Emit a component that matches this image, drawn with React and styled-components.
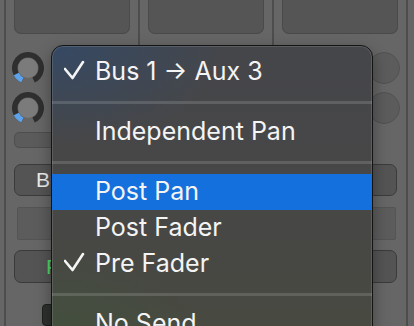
import styled, { createGlobalStyle } from 'styled-components';

const GlobalStyle = createGlobalStyle`
    html, body {
        margin: 0;
        padding: 0;
        background: #666666;
        overflow: hidden;
    }
    body {
        font-family: Inter, "Liberation Sans", sans-serif;
        -webkit-font-smoothing: antialiased;
    }
`;

const Screen = styled.div`
    position: relative;
    width: 414px;
    height: 326px;
    overflow: hidden;
`;

const Mixer = styled.div`
    display: flex;
    margin-left: -130px;
    height: 326px;
`;

const Strip = styled.div`
    flex: none;
    width: 132px;
    border-left: 2px solid #4d4d4d;
    background: #666666;
    display: flex;
    flex-direction: column;
`;

const TopBox = styled.div`
    margin: 0 8px;
    height: 37px;
    box-sizing: border-box;
    background: #555555;
    border: 1px solid #4a4a4a;
    border-top: none;
    border-radius: 0 0 7px 7px;
`;

const KnobRow = styled.div`
    display: flex;
    justify-content: space-between;
    padding: 0 6px;
    margin-top: ${p => p.$gap}px;
    height: 32px;
`;

const FlatKnob = styled.div`
    width: 32px;
    height: 32px;
    box-sizing: border-box;
    border-radius: 50%;
    background: #5c5c5c;
    border: 1px solid #525252;
`;

const ShortField = styled.div`
    margin: 8px 0 0 8px;
    width: 80px;
    height: 17px;
    box-sizing: border-box;
    border-radius: 5px;
    background: #5b5b5b;
    border: 1px solid #4e4e4e;
`;

const StripButton = styled.div`
    margin: ${p => p.$top}px 9px 0 8px;
    padding-left: ${p => p.$indent}px;
    height: 35px;
    box-sizing: border-box;
    border-radius: 7px;
    background: #545454;
    border: 1px solid #3b3b3b;
    display: flex;
    align-items: center;
    color: ${p => p.$color};
    font-size: 21px;
    font-family: "Liberation Sans", sans-serif;
    white-space: nowrap;
`;

const FlatField = styled.div`
    margin: 11px 10px 0 11px;
    height: 36px;
    box-sizing: border-box;
    background: #5c5c5c;
    border: 1px solid #545454;
    border-radius: 2px;
`;

const FaderCap = styled.div`
    margin: 21px 0 0 36px;
    width: 56px;
    height: 24px;
    box-sizing: border-box;
    background: #2e312e;
    border: 1px solid #1f1f1f;
    border-radius: 4px;
`;

const Menu = styled.div`
    position: absolute;
    left: 51px;
    top: 45px;
    width: 322px;
    height: 320px;
    box-sizing: border-box;
    padding-top: 8px;
    border: 1px solid #141414;
    border-radius: 12px;
    overflow: hidden;
    box-shadow: inset 0 0 0 1px rgba(255, 255, 255, 0.12), 0 6px 16px rgba(0, 0, 0, 0.35);
    background:
        radial-gradient(ellipse 55% 30% at 0% 0%, rgba(40, 75, 120, 0.55), transparent),
        radial-gradient(ellipse 50% 35% at 0% 100%, rgba(55, 95, 55, 0.4), transparent),
        linear-gradient(180deg, #45464a 0%, #474747 45%, #474843 70%, #494a3f 100%);
    color: #f4f4f4;
    font-size: 25px;
    font-family: Inter, "Liberation Sans", sans-serif;
`;

const Item = styled.div`
    height: 36px;
    box-sizing: border-box;
    padding: 0 0 3px 12px;
    display: flex;
    align-items: center;
    background: ${p => (p.$active ? '#1470dc' : 'transparent')};
    white-space: nowrap;
`;

const CheckSlot = styled.span`
    width: 31px;
    flex: none;
    display: flex;
    align-items: center;
`;

const Separator = styled.div`
    height: 24px;
    display: flex;
    align-items: center;

    &::after {
        content: '';
        flex: 1;
        height: 3px;
        background: rgba(255, 255, 255, 0.14);
    }
`;

const arc = (r, a0, a1) => {
    const pt = a => {
        const rad = (a * Math.PI) / 180;
        return `${(16 + r * Math.sin(rad)).toFixed(2)} ${(16 - r * Math.cos(rad)).toFixed(2)}`;
    };
    const large = a1 - a0 > 180 ? 1 : 0;
    return `M ${pt(a0)} A ${r} ${r} 0 ${large} 1 ${pt(a1)}`;
};

const Knob = () => (
    <svg width="32" height="32" viewBox="0 0 32 32">
        <path d={arc(13.2, 205, 515)} fill="none" stroke="#2f2f2f" strokeWidth="5.6" />
        <path d={arc(13.2, 205, 243)} fill="none" stroke="#5ea2ea" strokeWidth="5.6" />
        <circle cx="16" cy="16" r="10" fill="#7b7b7b" />
    </svg>
);

const Check = () => (
    <svg width="22" height="22" viewBox="0 0 22 22">
        <polyline points="1,9 8.5,18 19,2" fill="none" stroke="#f4f4f4" strokeWidth="2.6" strokeLinecap="round" strokeLinejoin="round" />
    </svg>
);

const MixerStrip = () => (
    <Strip>
        <TopBox />
        <KnobRow $gap={18}>
            <Knob />
            <FlatKnob />
        </KnobRow>
        <KnobRow $gap={8}>
            <Knob />
            <FlatKnob />
        </KnobRow>
        <ShortField />
        <StripButton $top={16} $indent={21} $color="#ececec">Bus 13</StripButton>
        <FlatField />
        <StripButton $top={10} $indent={31} $color="#4fd866">Post</StripButton>
        <FaderCap />
    </Strip>
);

const items = [
    { label: 'Bus 1 → Aux 3', checked: true },
    'sep',
    { label: 'Independent Pan' },
    'sep',
    { label: 'Post Pan', active: true },
    { label: 'Post Fader' },
    { label: 'Pre Fader', checked: true },
    'sep',
    { label: 'No Send' },
];

export default function App() {
    return (
        <>
            <GlobalStyle />
            <Screen>
                <Mixer>
                    {[0, 1, 2, 3, 4].map(i => <MixerStrip key={i} />)}
                </Mixer>
                <Menu>
                    {items.map((it, i) =>
                        it === 'sep' ? (
                            <Separator key={i} />
                        ) : (
                            <Item key={i} $active={it.active}>
                                <CheckSlot>{it.checked ? <Check /> : null}</CheckSlot>
                                {it.label}
                            </Item>
                        )
                    )}
                </Menu>
            </Screen>
        </>
    );
}
